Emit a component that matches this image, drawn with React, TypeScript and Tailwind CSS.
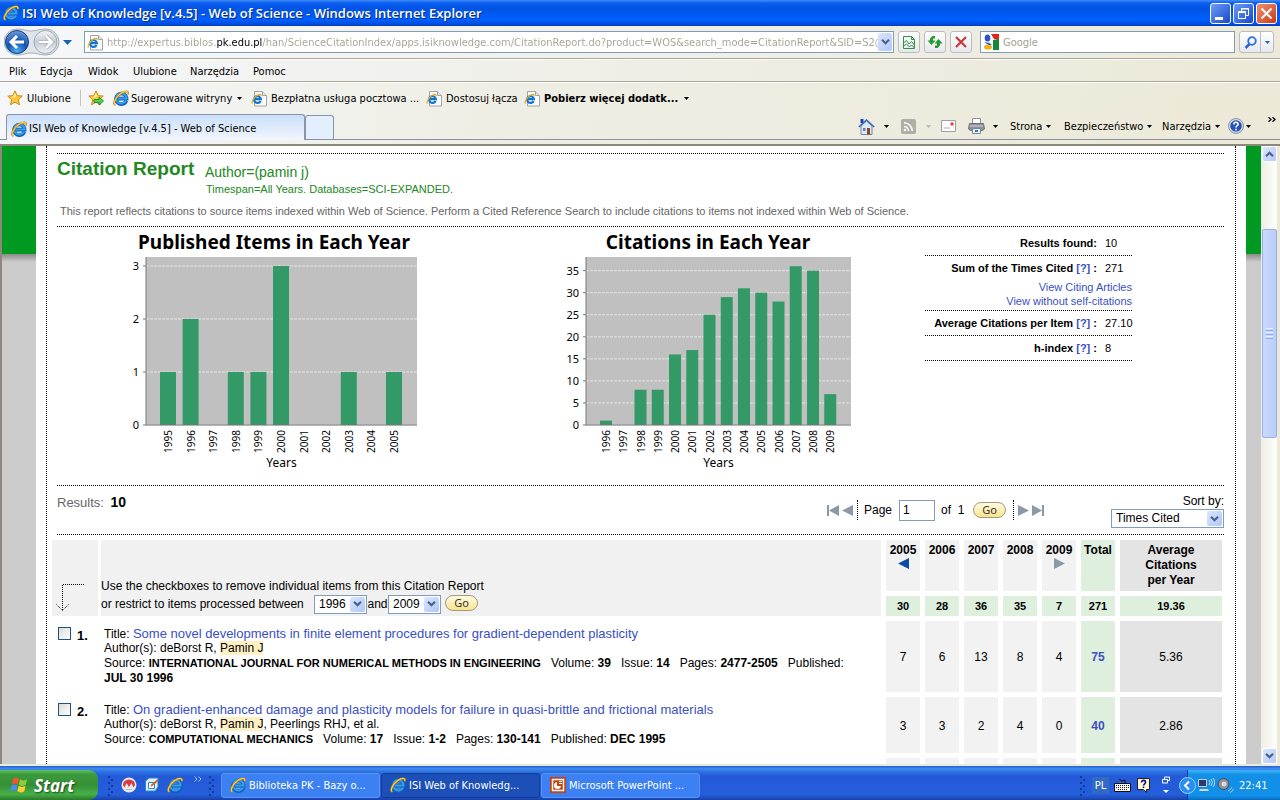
import React from 'react';

type ChartProps = {
  title: string;
  titleX: number;
  plotX: number;
  plotWidth: number;
  firstBar: number;
  step: number;
  barWidth: number;
  unit: number;
  ticks: number[];
  data: [number, number][];
};

const published: [number, number][] = [
  [1995, 1], [1996, 2], [1997, 0], [1998, 1], [1999, 1], [2000, 3],
  [2001, 0], [2002, 0], [2003, 1], [2004, 0], [2005, 1],
];

const citations: [number, number][] = [
  [1996, 1], [1997, 0], [1998, 8], [1999, 8], [2000, 16], [2001, 17], [2002, 25],
  [2003, 29], [2004, 31], [2005, 30], [2006, 28], [2007, 36], [2008, 35], [2009, 7],
];

const columns = ['2005', '2006', '2007', '2008', '2009'];
const totals = ['30', '28', '36', '35', '7'];

const records = [
  {
    id: 1,
    title: 'Some novel developments in finite element procedures for gradient-dependent plasticity',
    more: '',
    source: 'INTERNATIONAL JOURNAL FOR NUMERICAL METHODS IN ENGINEERING',
    volume: '39',
    issue: '14',
    pages: '2477-2505',
    date: 'JUL 30 1996',
    counts: ['7', '6', '13', '8', '4'],
    total: '75',
    average: '5.36',
  },
  {
    id: 2,
    title: 'On gradient-enhanced damage and plasticity models for failure in quasi-brittle and frictional materials',
    more: ', Peerlings RHJ, et al.',
    source: 'COMPUTATIONAL MECHANICS',
    volume: '17',
    issue: '1-2',
    pages: '130-141',
    date: 'DEC 1995',
    counts: ['3', '3', '2', '4', '0'],
    total: '40',
    average: '2.86',
  },
];

const BarChart: React.FC<ChartProps> = (p) => {
  const base = 198;
  return (
    <svg width="310" height="246" viewBox="0 0 310 246" className="shrink-0" role="img" aria-label={p.title}>
      <text x={p.titleX} y="22" textAnchor="middle" className="font-['Noto_Sans'] text-[19px] font-bold">
        {p.title}
      </text>
      <rect x={p.plotX} y="30" width={p.plotWidth} height="168" fill="#c0c0c0" />
      {p.ticks.map((t) => (
        <g key={t}>
          <line
            x1={p.plotX}
            x2={p.plotX + p.plotWidth}
            y1={base - t * p.unit}
            y2={base - t * p.unit}
            stroke="#e4e4e4"
            strokeDasharray={t ? '3 1' : undefined}
          />
          <line x1={p.plotX - 3} x2={p.plotX} y1={base - t * p.unit} y2={base - t * p.unit} stroke="#777" />
          <text x={p.plotX - 7} y={base - t * p.unit + 4} textAnchor="end" className="font-['Noto_Sans'] text-[11px]">
            {t}
          </text>
        </g>
      ))}
      {p.data.map(([year, value], i) => {
        const cx = p.firstBar + i * p.step;
        return (
          <g key={year}>
            <rect x={cx - p.barWidth / 2} y={base - value * p.unit} width={p.barWidth} height={value * p.unit} fill="#339966" />
            <text
              transform={`translate(${cx + 4} 226) rotate(-90)`}
              className="font-['Noto_Sans'] text-[10px]"
            >
              {year}
            </text>
          </g>
        );
      })}
      <path d={`M${p.plotX} 30V198H${p.plotX + p.plotWidth}`} fill="none" stroke="#777" />
      <text x={p.plotX + p.plotWidth / 2} y="240" textAnchor="middle" className="font-['Noto_Sans'] text-[12px]">
        Years
      </text>
    </svg>
  );
};

const IeIcon: React.FC<{ size?: number }> = ({ size = 16 }) => (
  <svg width={size} height={size} viewBox="0 0 16 16" className="shrink-0" fill="none">
    <circle cx="8" cy="8.5" r="6.5" fill="#bfe3fb" opacity="0.35" />
    <path d="M13.3 10.6A5.3 5.3 0 1 1 13.6 8.6H4.6" stroke="#0f5fb8" strokeWidth="3.600" />
    <path d="M13 10.6A5.2 5.2 0 1 1 13.5 8.5H4.8" stroke="#35a0ea" strokeWidth="2" />
    <path d="M2.4 14.8C-.8 14 2.6 7 8 3.4C12.2.6 16 .6 14.8 4.4" stroke="#b9790b" strokeWidth="2" />
    <path d="M2.4 14.6C-.4 13.8 2.8 7 8 3.3C12 .8 15.6.7 14.7 4" stroke="#ffcf45" strokeWidth="1.200" />
  </svg>
);

const PageIcon = () => (
  <svg width="17" height="17" viewBox="0 0 17 17" className="shrink-0" fill="none">
    <path d="M3.500 1.500h8l4 4v10.500h-12z" fill="#fcfcfc" stroke="#a4a4a4" />
    <path d="M11.500 1.500v4h4" stroke="#a4a4a4" fill="#e4e4e4" />
    <path d="M9.600 11A3.400 3.400 0 1 1 9.900 9.200H4" stroke="#1674cc" strokeWidth="2.200" />
    <path d="M1.500 13.500C0 12 3 7.500 6 5.500C8.500 3.800 10.500 4 10 6" stroke="#f0a818" strokeWidth="1.200" />
  </svg>
);

const Caret: React.FC<{ className?: string }> = ({ className = 'text-black' }) => (
  <svg width="5" height="3" viewBox="0 0 5 3" className={`shrink-0 ${className}`}>
    <path d="M0 0h5L2.5 3z" fill="currentColor" />
  </svg>
);

const Star: React.FC<{ arrow?: boolean }> = ({ arrow }) => (
  <svg width="16" height="16" viewBox="0 0 16 16" className="shrink-0">
    <path d="M8 .8l2.100 4.800 5.200.5-3.900 3.500 1.100 5.200L8 12.200l-4.500 2.600 1.100-5.200L.7 6.100l5.200-.5z" fill="#ffc83a" stroke="#c98208" strokeWidth="0.9" />
    <path d="M8 3l1.200 3.300L5 8z" fill="#fff0a8" />
    {arrow && <path d="M6 9.500h5V7l4.500 4-4.500 4v-2.500H6z" fill="#4fd14a" stroke="#15801a" strokeWidth="0.8" />}
  </svg>
);

const Chevron = () => (
  <svg width="9" height="6" viewBox="0 0 9 6" fill="none">
    <path d="M1 .8l3.500 3.500L8 .8" stroke="#4d6185" strokeWidth="2.200" />
  </svg>
);

type DropProps = { id: string; label: string; value: string; className: string };

const Dropdown: React.FC<DropProps> = ({ id, label, value, className }) => (
  <span className={`relative inline-block h-[19px] border border-[#7f9db9] bg-white ${className}`}>
    <select id={id} aria-label={label} className="block h-full w-full appearance-none pl-[4px] text-[12px] leading-[17px] outline-none">
      <option>{value}</option>
    </select>
    <span className="pointer-events-none absolute inset-y-px right-px flex w-[15px] items-center justify-center rounded-[2px] bg-linear-to-br from-[#dbe6ff] to-[#aec6f8]">
      <Chevron />
    </span>
  </span>
);

const GoButton = () => (
  <button className="h-[16px] w-[33px] rounded-full border border-[#a19a78] bg-linear-to-b from-[#fffbe0] to-[#fbe38d] font-['Noto_Sans'] text-[11px] leading-[12px] text-[#333]">
    Go
  </button>
);

const TitleBar = () => (
  <header className="flex h-[26px] shrink-0 items-center bg-[linear-gradient(#3f8df8,#0a5cf0_12%,#0054e3_35%,#0060ff_75%,#0050e6_90%,#003dc2)] px-[3px] text-white">
    <IeIcon />
    <h1 className="ml-[3px] flex-1 truncate font-['Open_Sans'] text-[13px] font-semibold leading-[20px] [text-shadow:1px_1px_#0a2a80]">
      ISI Web of Knowledge [v.4.5] - Web of Science - Windows Internet Explorer
    </h1>
    <div className="flex gap-[2px]">
      <button aria-label="Minimize" className="flex h-[21px] w-[21px] rounded-[3px] border border-white bg-linear-to-br from-[#6f9cf7] to-[#1846c8]">
        <span className="mb-[3px] ml-[4px] mt-auto h-[3px] w-[8px] bg-white" />
      </button>
      <button aria-label="Restore" className="flex h-[21px] w-[21px] items-center justify-center rounded-[3px] border border-white bg-linear-to-br from-[#6f9cf7] to-[#1846c8]">
        <svg width="13" height="13" viewBox="0 0 13 13" fill="none" stroke="#fff">
          <path d="M4.500 4V1.500h7v7H9M4 2h8" />
          <path d="M1.500 4.500h7v7h-7zM1 5.500h8" />
        </svg>
      </button>
      <button aria-label="Close" className="flex h-[21px] w-[21px] items-center justify-center rounded-[3px] border border-white bg-linear-to-br from-[#f09070] to-[#c9330c]">
        <svg width="13" height="13" viewBox="0 0 13 13" stroke="#fff" strokeWidth="2">
          <path d="M1.500 1.500l10 10M11.500 1.500l-10 10" />
        </svg>
      </button>
    </div>
  </header>
);

const toolButton =
  'flex h-[22px] w-[22px] shrink-0 items-center justify-center rounded-[3px] border border-[#b9bcc4] bg-linear-to-b from-white to-[#e6e8ee]';

const AddressBar = () => (
  <div className="flex h-[33px] shrink-0 items-center border-b border-[#aca899] bg-linear-to-r from-[#f5f7fa] to-[#ece9d8] pl-[4px] pr-[6px]">
    <svg width="70" height="30" viewBox="0 0 70 30" className="shrink-0">
      <defs>
        <radialGradient id="back" cx="0.5" cy="0.9" r="0.9">
          <stop offset="0" stopColor="#4fb0f0" />
          <stop offset="0.5" stopColor="#1450b0" />
          <stop offset="1" stopColor="#6f9fdc" />
        </radialGradient>
        <linearGradient id="forward" x1="0" y1="0" x2="0" y2="1">
          <stop offset="0" stopColor="#f4f6f8" />
          <stop offset="0.5" stopColor="#c6ccd4" />
          <stop offset="1" stopColor="#f0f3f6" />
        </linearGradient>
      </defs>
      <path d="M13 2C20 2 22 4 27 4S36 2 42 2a13 13 0 0 1 0 26C36 28 33 26 27 26S20 28 13 28A13 13 0 0 1 13 2z" fill="#dfe4ea" stroke="#a8b0ba" />
      <circle cx="13" cy="15" r="11.500" fill="url(#back)" stroke="#123c80" />
      <circle cx="41.500" cy="15" r="11.500" fill="url(#forward)" stroke="#a0a8b2" />
      <path d="M20 15H8M13 9l-6 6 6 6" fill="none" stroke="#fff" strokeWidth="3" />
      <path d="M35 15h12M42 9l6 6-6 6" fill="none" stroke="#a0a6ae" strokeWidth="4" />
      <path d="M35 15h12M42 9l6 6-6 6" fill="none" stroke="#fff" strokeWidth="2.500" />
      <path d="M59 13h9l-4.500 5z" fill="#1c5fae" />
    </svg>
    <div className="ml-[10px] flex h-[22px] min-w-0 flex-1 items-center border border-[#7f9db9] bg-white pl-[2px] pr-px">
      <PageIcon />
      <input
        aria-label="Address"
        readOnly
        value="http://expertus.biblos.pk.edu.pl/han/ScienceCitationIndex/apps.isiknowledge.com/CitationReport.do?product=WOS&search_mode=CitationReport&SID=S2@GHiJ"
        className="ml-[3px] min-w-0 flex-1 bg-[linear-gradient(90deg,#a5a193_110px,#000_110px,#000_155px,#a5a193_155px)] bg-clip-text pt-px text-transparent outline-none"
      />
      <button aria-label="Show addresses" className="flex h-[18px] w-[14px] items-center justify-center rounded-[2px] bg-linear-to-br from-[#dbe6ff] to-[#aec6f8]">
        <Chevron />
      </button>
    </div>
    <button aria-label="Compatibility view" className={`ml-[4px] ${toolButton}`}>
      <svg width="14" height="15" viewBox="0 0 14 15" fill="none" stroke="#2e9440">
        <path d="M1.500 1.500h8l3 3v9h-11zM9.500 1.500v3h3" />
        <path d="M1.500 8l3-2.500L7 9l2.500-2.500 3 3.500M1.500 11l3-2 3 3 2-2 3 3" />
      </svg>
    </button>
    <button aria-label="Refresh" className={`ml-[4px] ${toolButton}`}>
      <svg width="16" height="16" viewBox="0 0 16 16" fill="#239a2c">
        <path d="M4.500 11L.5 6.500H3V4.500L5.500 2H8v2.500H6v2h2.500z" />
        <path d="M11.500 5l4 4.500H13v2L10.500 14H8v-2.500h2v-2H7.500z" />
      </svg>
    </button>
    <button aria-label="Stop" className={`ml-[4px] ${toolButton}`}>
      <svg width="12" height="12" viewBox="0 0 12 12" stroke="#c93a3a" strokeWidth="2.200">
        <path d="M1 1l10 10M11 1L1 11" />
      </svg>
    </button>
    <div className="ml-[8px] flex h-[22px] w-[255px] shrink-0 items-center border border-[#7f9db9] bg-white pl-[2px]">
      <svg width="16" height="16" viewBox="0 0 16 16" className="shrink-0">
        <path d="M0 0h16v16H0z" fill="#fff" />
        <path d="M8 0h8v6l-5-1z" fill="#e8211c" />
        <path d="M10 6l6-1v11h-6z" fill="#15873a" />
        <ellipse cx="4.500" cy="4" rx="2.800" ry="3.600" fill="#2555c8" />
        <ellipse cx="5" cy="13" rx="4" ry="2.600" fill="#f7ae18" />
        <path d="M1 8.300l5 .5 3 2-3 .2z" fill="#2555c8" />
      </svg>
      <input aria-label="Search" placeholder="Google" className="ml-[4px] min-w-0 flex-1 pt-px outline-none placeholder:text-[#a5a193]" />
    </div>
    <div className="ml-[4px] flex h-[22px] w-[35px] shrink-0 rounded-[3px] border border-[#b9bcc4] bg-linear-to-b from-white to-[#e6e8ee]">
      <button aria-label="Go to search" className="flex w-[21px] items-center justify-center border-r border-[#b9bcc4]">
        <svg width="13" height="13" viewBox="0 0 13 13" fill="none">
          <path d="M6 7.500L1.500 12" stroke="#2c63cc" strokeWidth="2.500" />
          <circle cx="8" cy="5" r="3.800" stroke="#2c6fe0" strokeWidth="1.800" />
        </svg>
      </button>
      <button aria-label="Search options" className="flex flex-1 items-center justify-center">
        <Caret className="text-[#1c5fd0]" />
      </button>
    </div>
  </div>
);

const MenuBar = () => (
  <nav className="flex h-[23px] shrink-0 items-center border-b border-t border-b-[#aca899] border-t-white bg-linear-to-r from-[#f5f7fa] via-[#efeee6] to-[#ece9d8] pl-[9px] pt-[2px]">
    <button className="w-[31px] text-left">Plik</button>
    <button className="w-[48px] text-left">Edycja</button>
    <button className="w-[45px] text-left">Widok</button>
    <button className="w-[57px] text-left">Ulubione</button>
    <button className="w-[63px] text-left">Narzędzia</button>
    <button className="text-left">Pomoc</button>
  </nav>
);

const Favorites = () => (
  <div className="flex h-[31px] shrink-0 items-center border-t border-white pl-[7px]">
    <button className="flex w-[74px] items-center gap-[4px] border-r border-[#c5c2b2]">
      <Star />
      Ulubione
    </button>
    <button aria-label="Add to favorites" className="ml-[7px]">
      <Star arrow />
    </button>
    <button className="ml-[9px] flex w-[138px] items-center gap-[2px] whitespace-nowrap">
      <IeIcon />
      Sugerowane witryny
      <Caret className="ml-[3px] text-black" />
    </button>
    <button className="flex w-[175px] items-center gap-[3px] whitespace-nowrap">
      <PageIcon />
      Bezpłatna usługa pocztowa ...
    </button>
    <button className="flex w-[98px] items-center gap-[3px] whitespace-nowrap">
      <PageIcon />
      Dostosuj łącza
    </button>
    <button className="flex items-center gap-[3px] whitespace-nowrap font-bold">
      <PageIcon />
      Pobierz więcej dodatk...
      <Caret className="ml-[3px] text-black" />
    </button>
  </div>
);

const TabRow = () => (
  <div className="flex h-[27px] shrink-0 items-end border-b border-[#8b8ea4] pl-[6px]">
    <button className="-mb-px flex h-[26px] w-[299px] items-center gap-[2px] rounded-t-[3px] border border-b-0 border-[#8b93a8] bg-linear-to-b from-[#c9dffb] to-[#f2f6fd] pl-[4px] pt-[2px] text-left">
      <IeIcon />
      ISI Web of Knowledge [v.4.5] - Web of Science
    </button>
    <button aria-label="New tab" className="h-[24px] w-[29px] rounded-t-[3px] border border-b-0 border-[#8b93a8] bg-[#e3effc]" />
    <div className="ml-auto flex h-[27px] items-center pr-[4px] pt-px">
      <button aria-label="Home" className="flex w-[43px] items-center gap-[9px]">
        <svg width="17" height="17" viewBox="0 0 17 17">
          <path d="M2.500 1h3v4h-3z" fill="#1a3fc0" />
          <path d="M3 8l5.500-5L14 8v8.500H3z" fill="#dfe8f8" stroke="#7185a8" />
          <path d="M.8 9L8.500 2l7.700 7" fill="none" stroke="#3b6bb0" strokeWidth="1.600" />
          <path d="M9 10h3v6.500H9z" fill="#8a4a28" />
          <path d="M5 10h2.500v3H5z" fill="#5b84c4" />
        </svg>
        <Caret />
      </button>
      <button aria-label="Feeds" className="flex w-[40px] items-center gap-[10px]">
        <svg width="15" height="15" viewBox="0 0 15 15" fill="none">
          <rect width="15" height="15" rx="2" fill="#b0aea6" />
          <path d="M3 7.500a4.500 4.500 0 0 1 4.500 4.500M3 3.800A8.200 8.200 0 0 1 11.200 12" stroke="#fff" strokeWidth="1.600" />
          <circle cx="4" cy="11" r="1.300" fill="#fff" />
        </svg>
        <Caret className="text-[#bdbab0]" />
      </button>
      <button aria-label="Read mail" className="w-[27px]">
        <svg width="15" height="12" viewBox="0 0 15 12">
          <path d="M.5.5h14v11H.5z" fill="#fafafa" stroke="#a0a0a0" />
          <path d="M9.500 2.500h3v3h-3z" fill="#e04040" />
          <path d="M3 8h6" stroke="#b0b0b0" />
        </svg>
      </button>
      <button aria-label="Print" className="flex w-[42px] items-center gap-[8px]">
        <svg width="17" height="16" viewBox="0 0 17 16">
          <path d="M4.500.5h8v6h-8z" fill="#fff" stroke="#909090" />
          <path d="M1.500 5.500h14l1 5.500-2 1.500h-12L.5 11z" fill="#8d9199" stroke="#6c7078" />
          <path d="M2 8h13" stroke="#d8dadd" />
          <path d="M4.500 10.500h8v5h-8z" fill="#e8f2fc" stroke="#7c8794" />
          <path d="M7 13h3" stroke="#3878d0" strokeWidth="2" />
        </svg>
        <Caret />
      </button>
      <button className="flex w-[54px] items-center gap-[4px] whitespace-nowrap">Strona <Caret /></button>
      <button className="flex w-[98px] items-center gap-[4px] whitespace-nowrap">Bezpieczeństwo <Caret /></button>
      <button className="flex w-[66px] items-center gap-[4px] whitespace-nowrap">Narzędzia <Caret /></button>
      <button aria-label="Help" className="flex w-[40px] items-center gap-[2px]">
        <svg width="16" height="16" viewBox="0 0 16 16">
          <circle cx="8" cy="8" r="7.500" fill="#d4dbe8" stroke="#8b94a8" />
          <circle cx="8" cy="8" r="5.800" fill="#2754b8" />
          <path d="M5.800 6.500C5.800 3.600 10.200 3.700 10.200 6.200C10.200 7.700 8 7.700 8 9.500M8 10.800v1.600" fill="none" stroke="#fff" strokeWidth="1.600" />
        </svg>
        <Caret />
      </button>
      <button aria-label="More commands" className="mb-[14px]">
        <svg width="8" height="5" viewBox="0 0 8 5" fill="none" stroke="#000" strokeWidth="1.300">
          <path d="M.5.3l2.500 2.200L.5 4.700M4.500.3L7 2.500 4.500 4.700" />
        </svg>
      </button>
    </div>
  </div>
);

const Help = () => (
  <a href="#help" className="text-[#3a4fc4]">[?]</a>
);

const Stats = () => (
  <dl className="ml-[58px] mt-[4px] w-[207px] shrink-0 text-[11px] leading-[14px]">
    <div className="flex h-[25px] items-center justify-end gap-[8px] border-b border-dotted border-black">
      <dt className="whitespace-nowrap font-bold">Results found:</dt>
      <dd className="w-[27px]">10</dd>
    </div>
    <div className="flex h-[24px] items-center justify-end gap-[8px]">
      <dt className="whitespace-nowrap font-bold">Sum of the Times Cited <Help /> :</dt>
      <dd className="w-[27px]">271</dd>
    </div>
    <div className="h-[31px] border-b border-dotted border-black text-right text-[#3a4fc4]">
      <a href="#citing" className="block">View Citing Articles</a>
      <a href="#self" className="block">View without self-citations</a>
    </div>
    <div className="flex h-[25px] items-center justify-end gap-[8px] border-b border-dotted border-black">
      <dt className="whitespace-nowrap font-bold">Average Citations per Item <Help /> :</dt>
      <dd className="w-[27px]">27.10</dd>
    </div>
    <div className="flex h-[25px] items-center justify-end gap-[8px] border-b border-dotted border-black">
      <dt className="whitespace-nowrap font-bold">h-index <Help /> :</dt>
      <dd className="w-[27px]">8</dd>
    </div>
  </dl>
);

const Pager = () => (
  <div className="flex h-[20px] items-center">
    <button aria-label="First page">
      <svg width="12" height="11" viewBox="0 0 12 11" fill="#8b98a5"><path d="M0 0h2v11H0zM12 0v11L2 5.500z" /></svg>
    </button>
    <button aria-label="Previous page" className="ml-[3px]">
      <svg width="11" height="11" viewBox="0 0 11 11" fill="#8b98a5"><path d="M11 0v11L0 5.500z" /></svg>
    </button>
    <span className="ml-[4px] h-full border-l border-dotted border-black" />
    <label htmlFor="page" className="ml-[6px] w-[35px]">Page</label>
    <input id="page" defaultValue="1" className="h-[21px] w-[36px] border border-[#7f9db9] pl-[3px] outline-none" />
    <span className="ml-[6px] w-[32px] whitespace-pre">of  1</span>
    <GoButton />
    <span className="ml-[7px] h-full border-l border-dotted border-black" />
    <button aria-label="Next page" className="ml-[4px]">
      <svg width="11" height="11" viewBox="0 0 11 11" fill="#8b98a5"><path d="M0 0v11l11-5.500z" /></svg>
    </button>
    <button aria-label="Last page" className="ml-[3px]">
      <svg width="12" height="11" viewBox="0 0 12 11" fill="#8b98a5"><path d="M0 0v11l10-5.500zM10 0h2v11h-2z" /></svg>
    </button>
  </div>
);

const ResultsTable = () => (
  <table className="w-full table-fixed border-separate border-spacing-[5px] text-[12px] leading-[15px]">
    <colgroup>
      <col className="w-[46px]" />
      <col />
      <col className="w-[34px]" />
      <col className="w-[34px]" />
      <col className="w-[34px]" />
      <col className="w-[34px]" />
      <col className="w-[34px]" />
      <col className="w-[34px]" />
      <col className="w-[102px]" />
    </colgroup>
    <thead>
      <tr className="h-[51px] align-top">
        <td colSpan={2} rowSpan={2} className="p-0">
          <div className="flex h-[76px] gap-[3px]">
            <div className="flex w-[46px] items-end bg-[#f1f1f1] pb-[5px] pl-[4px]">
              <svg width="28" height="28" viewBox="0 0 28 28" fill="none" stroke="#000" strokeDasharray="1 1">
                <path d="M28 1.500H6.500V27M.5 21.500l6 6 6-6" />
              </svg>
            </div>
            <div className="flex flex-1 flex-col justify-end bg-[#f1f1f1] pb-[2px]">
              <p className="leading-[16px]">Use the checkboxes to remove individual items from this Citation Report</p>
              <div className="flex h-[20px] items-center">
                <span className="w-[213px] whitespace-nowrap">or restrict to items processed between</span>
                <Dropdown id="from" label="From year" value="1996" className="w-[53px]" />
                <span className="w-[21px] text-center">and</span>
                <Dropdown id="to" label="To year" value="2009" className="w-[53px]" />
                <span className="mb-[2px] ml-[4px] flex"><GoButton /></span>
              </div>
            </div>
          </div>
        </td>
        {columns.map((c) => (
          <th key={c} scope="col" className="bg-[#f2f2f2] px-0 py-[3px]">
            {c}
            {c === '2005' && (
              <button aria-label="Earlier years" className="mx-auto block">
                <svg width="11" height="11" viewBox="0 0 11 11" fill="#0a4ea2"><path d="M11 0v11L0 5.500z" /></svg>
              </button>
            )}
            {c === '2009' && (
              <button aria-label="Later years" className="mx-auto block">
                <svg width="11" height="11" viewBox="0 0 11 11" fill="#8b98a5"><path d="M0 0v11l11-5.500z" /></svg>
              </button>
            )}
          </th>
        ))}
        <th scope="col" className="bg-[#dfefdd] px-0 py-[3px]">Total</th>
        <th scope="col" className="bg-[#e4e4e4] px-0 py-[3px]">Average<br />Citations<br />per Year</th>
      </tr>
      <tr className="h-[20px] text-center text-[11px] font-bold">
        {totals.map((t, i) => (
          <td key={i} className="bg-[#dfefdd] p-0">{t}</td>
        ))}
        <td className="bg-[#dfefdd] p-0">271</td>
        <td className="bg-[#dfefdd] p-0">19.36</td>
      </tr>
    </thead>
    <tbody>
      {records.map((r) => (
        <tr key={r.id}>
          <td className="p-0 align-top">
            <label className="flex items-start pl-[6px] pt-[6px]">
              <input type="checkbox" className="h-[13px] w-[13px] shrink-0 appearance-none border border-[#1c5180] bg-linear-to-br from-[#dcdcd7] to-white" />
              <span className="ml-[6px] whitespace-nowrap text-[13px] font-bold leading-[17px]">{r.id}.</span>
            </label>
          </td>
          <td className="px-px pb-[6px] pt-[5px] align-top">
            <div className="h-[15px]">Title: <a href="#record" className="text-[13px] text-[#3a4fc4]">{r.title}</a></div>
            <div className="h-[15px]">Author(s): deBorst R, <mark className="bg-[#fff0c4]">Pamin J</mark>{r.more}</div>
            <div>
              Source: <b className="text-[11px] leading-[13px]">{r.source}</b>
              {' \u00a0 '}Volume: <b>{r.volume}</b>
              {' \u00a0 '}Issue: <b>{r.issue}</b>
              {' \u00a0 '}Pages: <b>{r.pages}</b>
              {' \u00a0 '}Published: {r.id === 1 && <br />}<b>{r.date}</b>
            </div>
          </td>
          {r.counts.map((c, i) => (
            <td key={i} className="bg-[#f2f2f2] px-0 pb-0 pt-[2px] text-center">{c}</td>
          ))}
          <td className="bg-[#dfefdd] px-0 pb-0 pt-[2px] text-center font-bold">
            <a href="#total" className="text-[#3a4fc4]">{r.total}</a>
          </td>
          <td className="bg-[#e4e4e4] px-0 pb-0 pt-[2px] text-center">{r.average}</td>
        </tr>
      ))}
      <tr className="h-[56px]">
        <td colSpan={2} />
        {columns.map((c) => (
          <td key={c} className="bg-[#f2f2f2]" />
        ))}
        <td className="bg-[#dfefdd]" />
        <td className="bg-[#e4e4e4]" />
      </tr>
    </tbody>
  </table>
);

const SideStrip: React.FC<{ className: string }> = ({ className }) => (
  <div className={`shrink-0 bg-[#ccc] ${className}`}>
    <div className="h-[108px] bg-[#009a22]" />
    <div className="h-[8px] bg-linear-to-b from-[#8c8c8c] to-[#ccc]" />
  </div>
);

const ScrollButton: React.FC<{ label: string; up?: boolean }> = ({ label, up }) => (
  <button
    aria-label={label}
    className="flex h-[16px] w-[15px] shrink-0 items-center justify-center rounded-[2px] border border-white bg-linear-to-br from-[#dbe6ff] to-[#b4c9f8]"
  >
    <span className={up ? 'rotate-180' : ''}><Chevron /></span>
  </button>
);

const ScrollBar = () => (
  <div className="flex w-[19px] shrink-0 flex-col border-r-3 border-[#ece9d8] bg-linear-to-r from-[#f0eee6] to-[#fefefb] pl-px">
    <ScrollButton label="Scroll up" up />
    <div className="mt-[67px] flex h-[209px] w-[15px] flex-col items-center justify-center gap-px rounded-[2px] border border-[#98b0e8] bg-linear-to-r from-[#cbdafe] to-[#b9cdfb]">
      <span className="h-px w-[7px] bg-[#eef4fe]" />
      <span className="h-px w-[7px] bg-[#8cb0f8]" />
      <span className="h-px w-[7px] bg-[#eef4fe]" />
      <span className="h-px w-[7px] bg-[#8cb0f8]" />
      <span className="h-px w-[7px] bg-[#eef4fe]" />
      <span className="h-px w-[7px] bg-[#8cb0f8]" />
    </div>
    <div className="mt-auto"><ScrollButton label="Scroll down" /></div>
  </div>
);

const Report = () => (
  <main className="flex min-h-0 flex-1 overflow-hidden border-l-2 border-t-2 border-[#8c887a] bg-white font-['Liberation_Sans',Arial,sans-serif] text-[12px]">
    <SideStrip className="w-[34px]" />
    <div className="mx-[10px] min-w-0 flex-1 border-x border-dotted border-black pt-[7px]">
      <div className="ml-[10px] mr-[11px]">
        <section className="h-[74px] border-y border-dotted border-black text-[11px] text-[#228822]">
          <div className="flex">
            <h2 className="mt-[3px] w-[148px] whitespace-nowrap text-[19px] font-bold leading-[24px]">Citation Report</h2>
            <div>
              <p className="mt-[10px] text-[14px] leading-[17px]">Author=(pamin j)</p>
              <p className="pl-px leading-[16px]">Timespan=All Years. Databases=SCI-EXPANDED.</p>
            </div>
          </div>
          <p className="mt-[7px] pl-[3px] leading-[14px] text-[#666]">
            This report reflects citations to source items indexed within Web of Science. Perform a Cited Reference Search to include citations to items not indexed within Web of Science.
          </p>
        </section>
        <section className="flex h-[259px] border-b border-dotted border-black pl-[60px]">
          <BarChart
            title="Published Items in Each Year"
            titleX={157}
            plotX={29}
            plotWidth={271}
            firstBar={51}
            step={22.6}
            barWidth={16}
            unit={53}
            ticks={[0, 1, 2, 3]}
            data={published}
          />
          <div className="ml-[130px]">
            <BarChart
              title="Citations in Each Year"
              titleX={151}
              plotX={29}
              plotWidth={265}
              firstBar={49}
              step={17.25}
              barWidth={12}
              unit={4.41}
              ticks={[0, 5, 10, 15, 20, 25, 30, 35]}
              data={citations}
            />
          </div>
          <Stats />
        </section>
        <section className="flex h-[49px] border-b border-dotted border-black">
          <p className="mt-[8px] text-[13px] leading-[16px] text-[#666]">
            Results: <b className="ml-[3px] text-[14px] text-black">10</b>
          </p>
          <div className="ml-auto mt-[14px]"><Pager /></div>
          <div className="ml-[67px] mt-[8px] flex w-[113px] flex-col items-end">
            <label htmlFor="sort" className="leading-[15px]">Sort by:</label>
            <Dropdown id="sort" label="Sort by" value="Times Cited" className="w-full" />
          </div>
        </section>
      </div>
      <div className="mr-[8px]"><ResultsTable /></div>
    </div>
    <SideStrip className="w-[15px]" />
    <ScrollBar />
  </main>
);

const Dots = () => (
  <svg width="6" height="22" viewBox="0 0 6 22" fill="#123c9c" className="shrink-0">
    <path d="M0 2h2v2H0zM3 5h2v2H3zM0 8h2v2H0zM3 11h2v2H3zM0 14h2v2H0zM3 17h2v2H3zM0 20h2v2H0z" />
  </svg>
);

const taskButton = 'flex h-[25px] w-[159px] items-center gap-[3px] rounded-[3px] border pl-[8px] whitespace-nowrap';

const TaskBar = () => (
  <footer className="flex h-[36px] shrink-0 items-end border-t-2 border-[#ece9d8] bg-[linear-gradient(#1f5fd0,#3f8cf0_8%,#2a70e0_18%,#2459d8_30%,#245edb_85%,#1941a5)] text-white">
    <button className="flex h-[30px] w-[98px] items-center gap-[5px] rounded-r-[9px] bg-[linear-gradient(#5fbf5f,#3c9a3c_15%,#368f36_50%,#48b048_80%,#2a7a2a)] pl-[10px] font-['Open_Sans'] text-[17px] font-bold italic [text-shadow:1px_1px_2px_#1a4a1a]">
      <svg width="19" height="18" viewBox="0 0 19 18">
        <path d="M3 3Q6 .5 9 3L7.800 8.500Q5 6.500 1.800 8.500z" fill="#f0552a" />
        <path d="M10 3.300Q13 5.500 17 3.200L15.800 8.800Q12 11 8.800 8.800z" fill="#8ccf3c" />
        <path d="M1.500 9.500Q4.500 7.500 7.500 9.500L6.200 15Q3.500 13 .3 15z" fill="#4a8cf0" />
        <path d="M8.600 9.800Q12 12 15.500 9.800L14.300 15.200Q11 17.500 7.300 15.300z" fill="#fbd02c" />
      </svg>
      Start
    </button>
    <div className="flex h-[30px] items-center pl-[10px]">
      <Dots />
      <button aria-label="Media player" className="ml-[7px]">
        <svg width="16" height="16" viewBox="0 0 16 16">
          <circle cx="8" cy="8" r="7.500" fill="#e8e8ea" />
          <path d="M2 8a6 5.500 0 0 1 12 0l-1.500 2.500L10.500 6 8 10 5.500 6 3.500 10.500z" fill="#d83a40" />
          <path d="M5 12.500h6" stroke="#b8b8bc" />
        </svg>
      </button>
      <button aria-label="Show desktop" className="ml-[7px]">
        <svg width="16" height="16" viewBox="0 0 16 16">
          <path d="M1.500 4L5 1h9v9l-3 4H1.500z" fill="#dff0fc" stroke="#2a88c8" />
          <path d="M4.500 5.500h6v6h-6z" fill="#fff" stroke="#2a88c8" />
          <path d="M7 9l7-6" stroke="#c86a20" strokeWidth="2" />
        </svg>
      </button>
      <button aria-label="Internet Explorer" className="ml-[7px]"><IeIcon /></button>
      <svg width="8" height="6" viewBox="0 0 8 6" fill="none" stroke="#a8c8fc" className="mb-[12px] ml-[11px]">
        <path d="M.5.5L3 3 .5 5.500M4.500.5L7 3 4.500 5.500" />
      </svg>
      <span className="ml-[7px]"><Dots /></span>
      <div className="ml-[6px] flex gap-px">
        <button className={`${taskButton} border-[#5a94f8] bg-[#3c81f3]`}><IeIcon />Biblioteka PK - Bazy o...</button>
        <button className={`${taskButton} border-[#153c94] bg-[#1d4fb8]`}><IeIcon />ISI Web of Knowledg...</button>
        <button className={`${taskButton} border-[#5a94f8] bg-[#3c81f3]`}>
          <svg width="16" height="16" viewBox="0 0 16 16">
            <path d="M0 0h16v16H0z" fill="#c8420e" />
            <path d="M2.500 2.500h11v11h-11z" fill="none" stroke="#fff" strokeWidth="1.500" />
            <path d="M7 5v4h4a3.500 3.500 0 1 1-4-4z" fill="#fff" />
            <path d="M9 4.500h3M9 6.500h3" stroke="#fff" />
          </svg>
          Microsoft PowerPoint ...
        </button>
      </div>
    </div>
    <div className="ml-auto flex h-[30px] items-center">
      <Dots />
      <button className="ml-[6px] h-[17px] w-[17px] bg-[#316ac5] text-center">PL</button>
      <svg width="17" height="13" viewBox="0 0 17 13" className="ml-[5px]">
        <path d="M5 0l3 2 3-1v3" fill="none" stroke="#111" />
        <path d="M.5 4.500h16v8H.5z" fill="#f4f4f4" stroke="#111" />
        <path d="M2 6.500h13M2 8.500h13M4 10.500h9" stroke="#222" strokeDasharray="1 1" />
      </svg>
      <svg width="15" height="15" viewBox="0 0 15 15" className="ml-[6px]">
        <path d="M.5.5h12v11h-3v3l-3-3h-6z" fill="#fffbd8" stroke="#222" />
        <path d="M4.500 4.500C4.500 1.500 8.500 2 8.500 4.300C8.500 6 6.500 6 6.500 7.500M6.500 8.500v1.500" fill="none" stroke="#10107c" strokeWidth="1.600" />
      </svg>
      <svg width="8" height="18" viewBox="0 0 8 18" className="ml-[10px]" fill="none" stroke="#fff">
        <path d="M2.500 3V1h5v3.500H6M.5 3.500h5V7h-5z" />
        <path d="M1 14h6l-3 3z" fill="#fff" stroke="none" />
      </svg>
      <div className="ml-[17px] flex h-[30px] w-[93px] items-center border-l border-[#0c3c9c] bg-[linear-gradient(#3fb4f8,#1290e8_15%,#1190ea_85%,#0a6cc0)]">
        <button aria-label="Show hidden icons" className="-ml-[9px]">
          <svg width="17" height="17" viewBox="0 0 17 17">
            <circle cx="8.500" cy="8.500" r="8" fill="#2a8ef0" stroke="#9cd0fc" />
            <path d="M10 4.500l-4 4 4 4" fill="none" stroke="#fff" strokeWidth="2" />
          </svg>
        </button>
        <svg width="17" height="16" viewBox="0 0 17 16" className="ml-[2px]">
          <path d="M.5 2.500h8v7h-8z" fill="#2c3c6c" stroke="#c8ccd4" />
          <path d="M2 12h8l1 2H1z" fill="#d8d8d0" />
          <path d="M11 3q2 2.500 0 5M13 2q3 3.500 0 7M15 1q3.500 4.500 0 9" fill="none" stroke="#c8d8f0" />
        </svg>
        <svg width="17" height="16" viewBox="0 0 17 16" className="ml-[2px]">
          <circle cx="6.500" cy="7" r="5.500" fill="#8c9098" stroke="#4a4e58" />
          <circle cx="7" cy="7" r="2.500" fill="#d8dae0" />
          <path d="M11 14q3-1 4-4M13 15.500q3-1 3.500-3.500" fill="none" stroke="#a8c0f8" />
        </svg>
        <time className="ml-[5px]">22:41</time>
      </div>
    </div>
  </footer>
);

export default function App() {
  return (
    <div className="flex h-screen flex-col overflow-hidden font-['DejaVu_Sans_Condensed','DejaVu_Sans',sans-serif] text-[11px] leading-[15px] text-black">
      <TitleBar />
      <AddressBar />
      <MenuBar />
      <div className="shrink-0 bg-[linear-gradient(100deg,#f5f7fa,#efeee4_40%,#ece9d8)] pb-[4px]">
        <Favorites />
        <TabRow />
      </div>
      <Report />
      <TaskBar />
    </div>
  );
}
